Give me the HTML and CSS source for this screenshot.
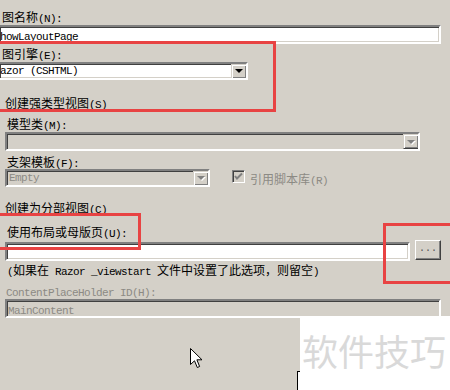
FILE: index.html
```html
<!DOCTYPE html>
<html lang="zh-CN">
  <head>
    <meta charset="UTF-8" />
    <title>添加视图</title>
    <link rel="stylesheet" href="styles.css">
  </head>

  <body>
    <div class="dialog">
      <div class="label first">图名称<span class="en">(N):</span></div>
      <div class="field white full"><span class="en">howLayoutPage</span></div>

      <div class="label engine-label">图引擎<span class="en">(E):</span></div>
      <div class="field white select engine">
        <span class="en value">azor (CSHTML)</span>
        <span class="drop"></span>
      </div>

      <div class="label check-label strong">创建强类型视图<span class="en">(S)</span></div>
      <div class="sub">
        <div class="label model">模型类<span class="en">(M):</span></div>
        <div class="field select model-box">
          <span class="value"></span>
          <span class="drop off"></span>
        </div>

        <div class="label scaffold">支架模板<span class="en">(F):</span></div>
        <div class="row">
          <div class="field select template">
            <span class="en value muted">Empty</span>
            <span class="drop off"></span>
          </div>
          <span class="checkbox">
            <svg width="9" height="9" viewBox="0 0 9 9"><polyline points="1,4 3,6.5 8,1.5" fill="none" stroke="#808080" stroke-width="2"/></svg>
          </span>
          <span class="label muted">引用脚本库<span class="en">(R)</span></span>
        </div>
      </div>

      <div class="label check-label partial">创建为分部视图<span class="en">(C)</span></div>
      <div class="sub">
        <div class="label layout">使用布局或母版页<span class="en">(U):</span></div>
        <div class="row picker">
          <div class="field white layout-box"></div>
          <span class="button">...</span>
        </div>
        <div class="label note"><span class="en">(</span>如果在<span class="en"> Razor _viewstart </span>文件中设置了此选项，则留空<span class="en">)</span></div>
        <div class="label muted holder"><span class="en">ContentPlaceHolder ID(H):</span></div>
        <div class="field holder-box"><span class="en muted">MainContent</span></div>
      </div>
    </div>

    <!-- annotation marks laid over the screenshot -->
    <div class="mark mark-engine"></div>
    <div class="mark mark-layout"></div>
    <div class="mark mark-picker"></div>

    <svg class="cursor" width="13" height="21" viewBox="0 0 13 21">
      <path d="M0.5 0.5 L0.5 16.5 L4.5 12.8 L7.3 19.5 L9.6 18.5 L6.9 11.8 L12 11.8 Z" fill="#fff" stroke="#000" stroke-width="1"/>
    </svg>

    <div class="corner"></div>
    <div class="watermark">软件技巧</div>
  </body>
</html>
```

FILE: styles.css
```css
* {
  margin: 0;
  padding: 0;
  box-sizing: border-box;
}
body {
  width: 450px;
  height: 390px;
  overflow: hidden;
  position: relative;
  background: #d4d0c8;
  font-family: "Noto Sans CJK SC", sans-serif;
  font-size: 12px;
  color: #000;
}
.dialog {
  width: 441px;
  display: flex;
  flex-direction: column;
}
.en {
  font-family: "Liberation Mono", monospace;
  font-size: 11px;
  letter-spacing: -0.6px;
}
.label {
  height: 16px;
  line-height: 18px;
  white-space: nowrap;
}
.muted {
  color: #8c8a84;
}
.first {
  margin-top: 8px;
  padding-left: 2px;
}
.field {
  height: 19px;
  line-height: 16px;
  padding: 0 1px;
  border: 2px solid;
  border-color: #808080 #fff #fff #808080;
  box-shadow: inset 1px 1px #404040, inset -1px -1px #d4d0c8;
  background: #d4d0c8;
  white-space: nowrap;
  overflow: hidden;
}
.white {
  background: #fff;
}
.label + .field,
.label + .select {
  margin-top: 1px;
}
.full {
  margin-top: 3px;
  border-left: 0;
  padding-left: 0;
}
.engine-label {
  margin-top: 1px;
  padding-left: 2px;
}
.select {
  display: flex;
  align-items: center;
  padding: 0 0 0 2px;
}
.select .value {
  flex: 1;
}
.drop {
  width: 16px;
  height: 15px;
  margin-right: -1px;
  display: flex;
  align-items: center;
  justify-content: center;
  background: #d4d0c8;
  border: 1px solid;
  border-color: #d4d0c8 #404040 #404040 #d4d0c8;
  box-shadow: inset 1px 1px #fff, inset -1px -1px #808080;
}
.drop::after {
  content: "";
  border-left: 4px solid transparent;
  border-right: 4px solid transparent;
  border-top: 4px solid #000;
}
.drop.off::after {
  border-top-color: #808080;
  filter: drop-shadow(1px 1px 0 #fff);
}
.engine {
  width: 248px;
  height: 18px;
  border-left: 0;
  padding-left: 0;
}
.check-label {
  padding-left: 5px;
}
.strong {
  margin-top: 14px;
}
.sub {
  padding-left: 5px;
  display: flex;
  flex-direction: column;
}
.sub > .label {
  padding-left: 2px;
}
.model {
  margin-top: 5px;
}
.model-box {
  width: 415px;
}
.scaffold {
  margin-top: 2px;
}
.row {
  display: flex;
  align-items: flex-start;
}
.template {
  width: 205px;
  height: 18px;
}
.checkbox {
  width: 13px;
  height: 13px;
  margin: 1px 0 0 22px;
  display: flex;
  align-items: center;
  justify-content: center;
  border: 1px solid;
  border-color: #808080 #fff #fff #808080;
  box-shadow: inset 1px 1px #404040, inset -1px -1px #d4d0c8;
  background: #d4d0c8;
}
.row .label {
  margin: 1px 0 0 5px;
}
.partial {
  margin-top: 12px;
}
.layout {
  margin-top: 8px;
}
.picker {
  margin-top: 1px;
  gap: 5px;
}
.layout-box {
  width: 405px;
  margin-top: 2px;
}
.button {
  width: 26px;
  height: 20px;
  line-height: 16px;
  text-align: center;
  font-family: "Liberation Mono", monospace;
  font-size: 10px;
  color: #555;
  background: #d4d0c8;
  border: 1px solid;
  border-color: #fff #404040 #404040 #fff;
  box-shadow: inset -1px -1px #808080;
}
.note {
  padding-left: 3px;
}
.sub > .holder {
  margin-top: 5px;
  padding-left: 1px;
}
.holder-box {
  width: 436px;
  margin-top: 2px;
}
.mark {
  position: absolute;
  border: 3px solid #e84343;
}
.mark-engine {
  left: -10px;
  top: 41px;
  width: 286px;
  height: 71px;
}
.mark-layout {
  left: -10px;
  top: 213px;
  width: 151px;
  height: 37px;
}
.mark-picker {
  left: 383px;
  top: 223px;
  width: 80px;
  height: 61px;
}
.cursor {
  position: absolute;
  left: 190px;
  top: 348px;
}
.corner {
  position: absolute;
  left: 297px;
  top: 371px;
  width: 20px;
  height: 30px;
  background: #fff;
  border-left: 1px solid #000;
  border-top: 1px solid #000;
}
.watermark {
  position: absolute;
  left: 300px;
  top: 316px;
  width: 150px;
  height: 74px;
  padding: 14px 0 0 2px;
  background: #fff;
  color: #d9d9d9;
  font-size: 36px;
  line-height: 40px;
  white-space: nowrap;
}
```
